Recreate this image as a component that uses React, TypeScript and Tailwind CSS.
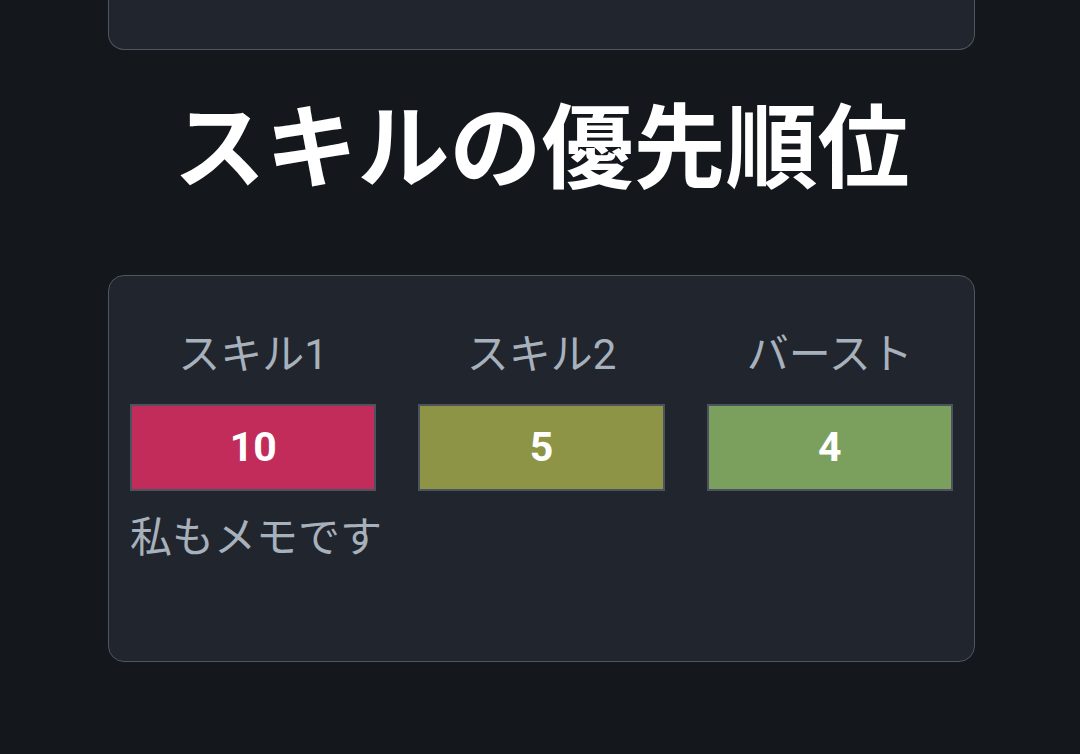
const SKILLS = [
  { label: 'スキル1', value: 10, color: 'bg-[#c12c5a]' },
  { label: 'スキル2', value: 5, color: 'bg-[#8e9446]' },
  { label: 'バースト', value: 4, color: 'bg-[#7ba05e]' },
];

export default function App() {
  return (
    <div
      className="min-h-[754px] w-full bg-[#14171c] pl-[108px]"
      style={{ fontFamily: "Roboto, 'Noto Sans CJK JP', sans-serif" }}
    >
      <div className="w-[867px]">
        <div className="h-[50px] rounded-b-2xl border-x border-b border-[#50565f] bg-[#21252e]" />

        <h1 className="mt-[46px] text-center text-[92px] font-bold leading-[108px] text-white">
          スキルの優先順位
        </h1>

        <section className="mt-[71px] rounded-2xl border border-[#50565f] bg-[#21252e] px-[21px] pb-[94px] pt-[50px]">
          <div className="grid grid-cols-3 gap-[42px]">
            {SKILLS.map((s) => (
              <div key={s.label} className="flex flex-col items-center">
                <span className="text-[42px] leading-[58px] text-[#a7b1bc]">{s.label}</span>
                <div
                  className={`mt-[20px] flex h-[87px] w-full items-center justify-center border-2 border-[#4d535e] ${s.color} text-[41px] font-bold text-white`}
                >
                  {s.value}
                </div>
              </div>
            ))}
          </div>
          <p className="mt-[18px] text-[42px] leading-[58px] text-[#a7b1bc]">私もメモです</p>
        </section>
      </div>
    </div>
  );
}
